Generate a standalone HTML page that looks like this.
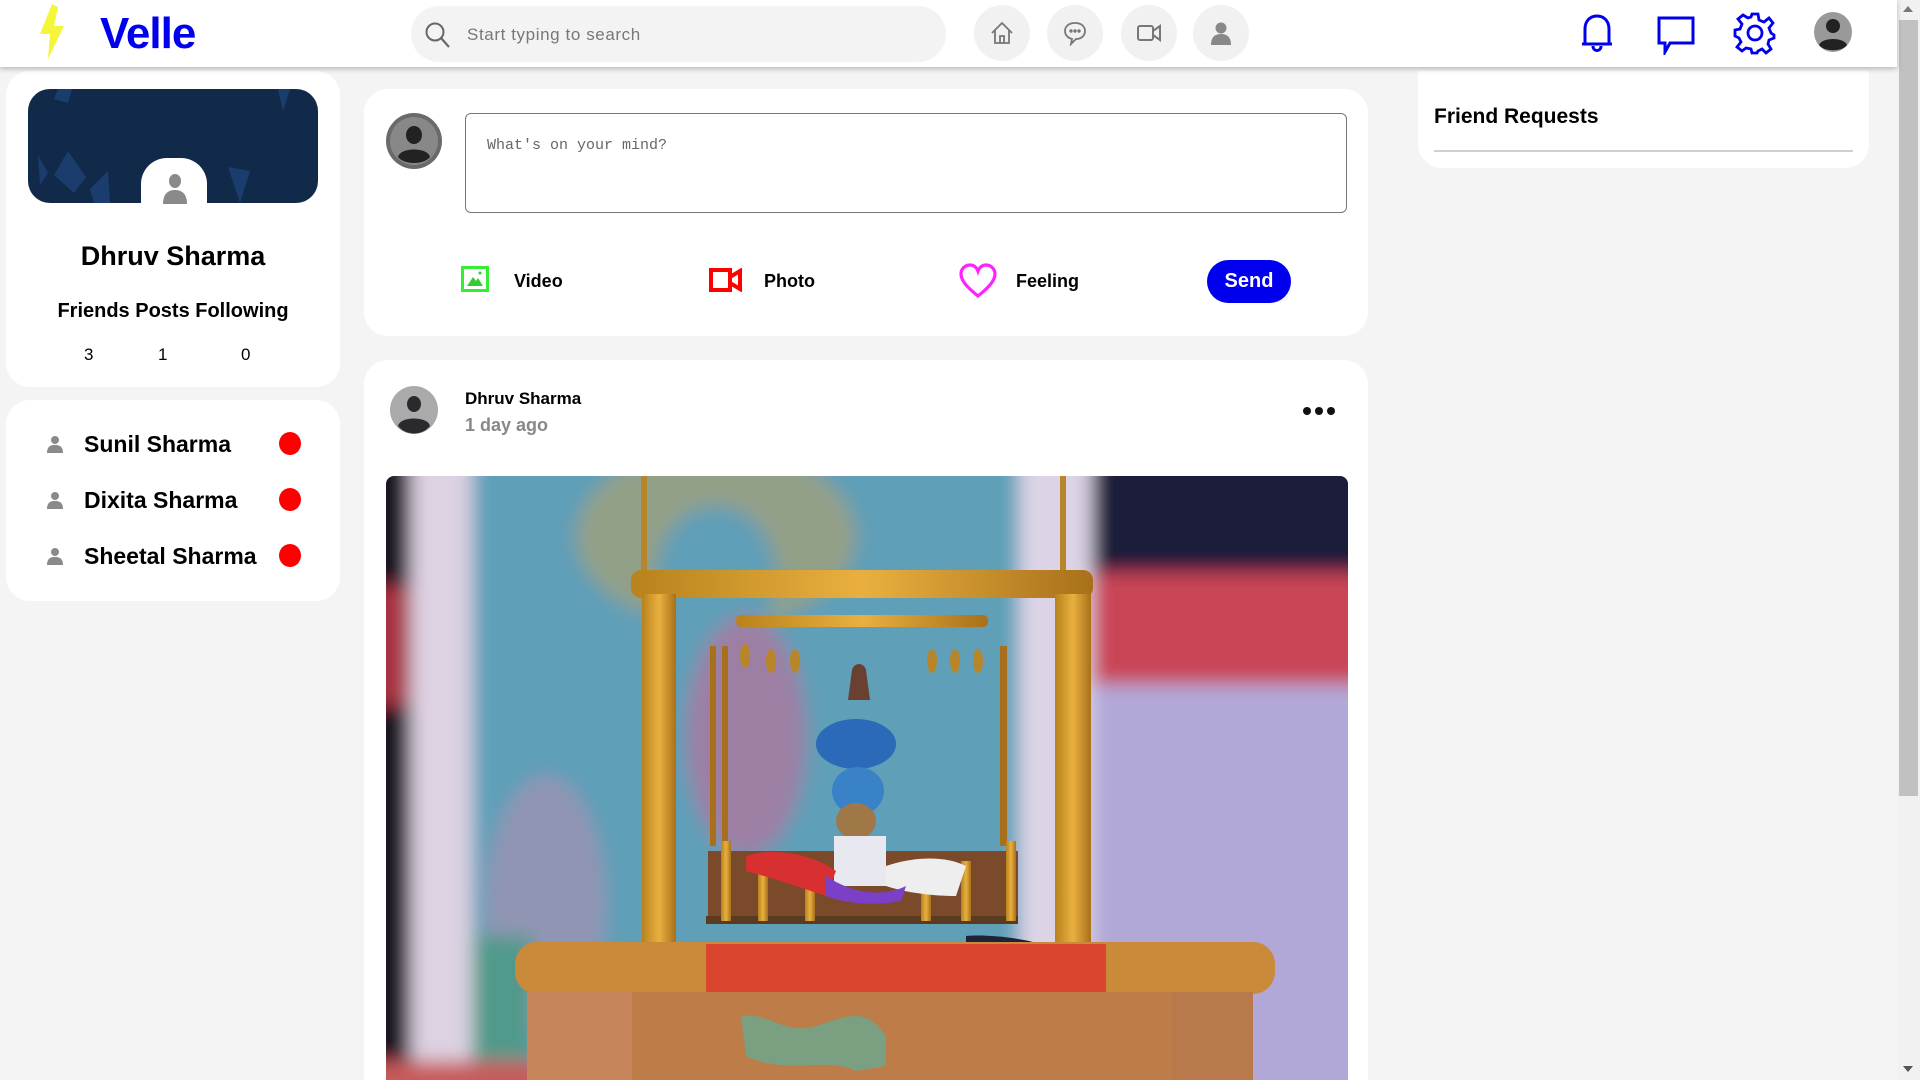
<!DOCTYPE html>
<html style="overflow:hidden;width:1920px;height:1080px"><head><meta charset="utf-8"><style>
*{margin:0;padding:0;box-sizing:border-box}
body{width:1920px;height:1080px;overflow:hidden;background:#f4f4f4;font-family:"Liberation Sans",Arial,sans-serif;position:relative}
.abs{position:absolute}
.hdr{left:0;top:0;width:1897px;height:67px;background:#fff;box-shadow:0 2px 5px rgba(0,0,0,.25);z-index:5}
.card{background:#fff;border-radius:24px;position:absolute}
.nb{position:absolute;top:5px;width:56px;height:56px;border-radius:50%;background:#f1f1f1;display:flex;align-items:center;justify-content:center}
.b{font-weight:bold}
</style></head><body>
<div class="abs hdr">
  <svg class="abs" style="left:36px;top:4px" width="32" height="55" viewBox="0 0 32 55"><path d="M16 0 L4 30 L14 30 L12 55 L28 22 L18 22 L22 3 Z" fill="#f5f53a"/></svg>
  <div class="abs b" style="left:100px;top:9px;font-size:44px;color:#0000ee;letter-spacing:-1px">Velle</div>
  <div class="abs" style="left:411px;top:6px;width:535px;height:56px;border-radius:28px;background:#f3f3f3"></div>
  <svg class="abs" style="left:424px;top:21px" width="28" height="28" viewBox="0 0 28 28"><circle cx="11" cy="11" r="8.5" fill="none" stroke="#666" stroke-width="2"/><path d="M17 17 L25 26" stroke="#666" stroke-width="2.2"/></svg>
  <div class="abs" style="left:467px;top:25px;font-size:17px;color:#777;letter-spacing:.6px">Start typing to search</div>
  <div class="nb" style="left:974px"><svg width="26" height="26" viewBox="0 0 26 26" fill="none" stroke="#777" stroke-width="1.8"><path d="M3 13 L13 3 L23 13 M6 10 V23 H20 V10 M11 23 V16 H15 V23"/></svg></div>
  <div class="nb" style="left:1047px"><svg width="26" height="26" viewBox="0 0 26 26" fill="none" stroke="#777" stroke-width="1.8"><path d="M13 3 C6 3 3 7 3 11 C3 15 6 18 10 19 L9 24 L14 19 C20 19 23 15 23 11 C23 7 20 3 13 3Z"/><circle cx="9" cy="11" r=".8" fill="#777"/><circle cx="13" cy="11" r=".8" fill="#777"/><circle cx="17" cy="11" r=".8" fill="#777"/></svg></div>
  <div class="nb" style="left:1121px"><svg width="28" height="26" viewBox="0 0 28 26" fill="none" stroke="#777" stroke-width="2"><rect x="3" y="6" width="15" height="14" rx="2"/><path d="M18 11 L25 6 V20 L18 15"/></svg></div>
  <div class="nb" style="left:1193px"><svg width="26" height="26" viewBox="0 0 26 26" fill="#888"><circle cx="13" cy="8" r="5.5"/><path d="M3 25 C3 17 7 14 13 14 C19 14 23 17 23 25Z"/></svg></div>
  <svg class="abs" style="left:1577px;top:12px" width="40" height="42" viewBox="0 0 40 42" fill="none" stroke="#0000ee" stroke-width="3"><path d="M8 32 V17 C8 9 13 4 20 4 C27 4 32 9 32 17 V32 Z M5 32 H35"/><path d="M16 34 C16 40 24 40 24 34"/></svg>
  <svg class="abs" style="left:1656px;top:15px" width="40" height="40" viewBox="0 0 40 40" fill="none" stroke="#0000ee" stroke-width="3"><path d="M3 3 H37 V28 H14 L9 37 V28 H3 Z"/></svg>
  <svg class="abs" style="left:1733px;top:11px" width="44" height="44" viewBox="0 0 44 44" fill="none" stroke="#0000ee" stroke-width="2.8"><path d="M19 3 H25 L26 9 L31 11 L36 7 L40 12 L36 17 L38 22 L41 24 V27 L36 29 L35 33 L38 38 L33 42 L29 38 L25 40 L24 42 H19 L18 38 L13 37 L9 40 L4 36 L8 31 L6 27 L2 25 V19 L7 18 L9 13 L5 8 L10 4 L15 7 L18 6 Z"/><circle cx="22" cy="22" r="7"/></svg>
  <svg class="abs" style="left:1814px;top:12px" width="38" height="40" viewBox="0 0 38 40"><ellipse cx="19" cy="20" rx="19" ry="20" fill="#999"/><circle cx="19" cy="14" r="7" fill="#222"/><path d="M5 33 C8 25 30 25 33 33 C28 40 10 40 5 33Z" fill="#222"/></svg>
</div>
<div class="abs" style="left:1897px;top:0;width:23px;height:1080px;background:#f1f1f1"></div>
<div class="abs" style="left:1899px;top:20px;width:19px;height:776px;background:#c1c1c1"></div>
<div class="abs" style="left:1903px;top:6px;width:0;height:0;border-left:5px solid transparent;border-right:5px solid transparent;border-bottom:6px solid #777"></div>
<div class="abs" style="left:1903px;top:1066px;width:0;height:0;border-left:5px solid transparent;border-right:5px solid transparent;border-top:6px solid #555"></div>

<div class="card" style="left:6px;top:71px;width:334px;height:316px">
  <div class="abs" style="left:22px;top:18px;width:290px;height:114px;border-radius:22px;background:#112a4a;overflow:hidden">
    <svg width="290" height="114" viewBox="0 0 290 114"><g fill="#1a3d6e"><path d="M30 0 L44 0 L40 14 L26 10Z"/><path d="M250 0 L262 0 L255 22Z"/><path d="M10 66 L20 84 L12 96Z"/><path d="M40 62 L58 88 L46 104 L26 86Z"/><path d="M62 100 L80 82 L82 114 L66 114Z"/><path d="M200 78 L222 82 L212 114Z"/></g></svg>
  </div>
  <div class="abs" style="left:135px;top:87px;width:66px;height:46px;background:#fff;border-radius:26px 26px 0 0"></div>
  <svg class="abs" style="left:155px;top:101px" width="28" height="32" viewBox="0 0 28 32" fill="#8a8a8a"><ellipse cx="14" cy="9" rx="6" ry="7"/><path d="M2 32 C2 22 7 18 14 18 C21 18 26 22 26 32Z"/></svg>
  <div class="abs b" style="left:0;width:334px;text-align:center;top:170px;font-size:27px;color:#000">Dhruv Sharma</div>
  <div class="abs b" style="left:0;width:334px;text-align:center;top:229px;font-size:20px;color:#000">Friends Posts Following</div>
  <div class="abs" style="left:78px;top:274px;font-size:17px">3</div>
  <div class="abs" style="left:152px;top:274px;font-size:17px">1</div>
  <div class="abs" style="left:235px;top:274px;font-size:17px">0</div>
</div>
<div class="card" style="left:6px;top:400px;width:334px;height:201px">
  <svg class="abs" style="left:41px;top:35px" width="16" height="18" viewBox="0 0 16 18" fill="#8a8a8a"><circle cx="8" cy="5" r="4"/><path d="M0 18 C0 11 4 10 8 10 C12 10 16 11 16 18Z"/></svg>
  <div class="abs b" style="left:78px;top:31px;font-size:23px">Sunil Sharma</div>
  <div class="abs" style="left:273px;top:32px;width:22px;height:23px;border-radius:50%;background:#f00"></div>
  <svg class="abs" style="left:41px;top:91px" width="16" height="18" viewBox="0 0 16 18" fill="#8a8a8a"><circle cx="8" cy="5" r="4"/><path d="M0 18 C0 11 4 10 8 10 C12 10 16 11 16 18Z"/></svg>
  <div class="abs b" style="left:78px;top:87px;font-size:23px">Dixita Sharma</div>
  <div class="abs" style="left:273px;top:88px;width:22px;height:23px;border-radius:50%;background:#f00"></div>
  <svg class="abs" style="left:41px;top:147px" width="16" height="18" viewBox="0 0 16 18" fill="#8a8a8a"><circle cx="8" cy="5" r="4"/><path d="M0 18 C0 11 4 10 8 10 C12 10 16 11 16 18Z"/></svg>
  <div class="abs b" style="left:78px;top:143px;font-size:23px">Sheetal Sharma</div>
  <div class="abs" style="left:273px;top:144px;width:22px;height:23px;border-radius:50%;background:#f00"></div>
</div>

<div class="card" style="left:364px;top:89px;width:1004px;height:247px">
  <svg class="abs" style="left:22px;top:24px" width="56" height="56" viewBox="0 0 56 56"><ellipse cx="28" cy="28" rx="28" ry="28" fill="#6a6a6a"/><ellipse cx="28" cy="28" rx="24" ry="24" fill="#888"/><ellipse cx="28" cy="22" rx="8" ry="9" fill="#222"/><path d="M12 44 C14 34 42 34 44 44 C38 52 18 52 12 44Z" fill="#222"/></svg>
  <div class="abs" style="left:101px;top:24px;width:882px;height:100px;border:1.5px solid #777;border-radius:6px"></div>
  <div class="abs" style="left:123px;top:48px;font-family:'Liberation Mono',monospace;font-size:15px;color:#666">What's on your mind?</div>
  <svg class="abs" style="left:97px;top:177px" width="28" height="26" viewBox="0 0 28 26"><rect x="1.5" y="1.5" width="25" height="23" fill="none" stroke="#33ee33" stroke-width="3"/><path d="M6 20 L12 11 L15 15 L17 12 L22 20Z" fill="#33cc33"/><circle cx="19" cy="7" r="1.5" fill="#33cc33"/></svg>
  <div class="abs b" style="left:150px;top:182px;font-size:18px">Video</div>
  <svg class="abs" style="left:345px;top:179px" width="34" height="24" viewBox="0 0 34 24"><rect x="2" y="2" width="19" height="20" fill="none" stroke="#f00" stroke-width="4"/><path d="M21 9 L31 3 V21 L21 15" fill="none" stroke="#f00" stroke-width="4"/></svg>
  <div class="abs b" style="left:400px;top:182px;font-size:18px">Photo</div>
  <svg class="abs" style="left:594px;top:174px" width="40" height="36" viewBox="0 0 40 36"><path d="M20 33 C10 25 3 18 3 11 C3 5 8 2 12 2 C16 2 19 5 20 8 C21 5 24 2 28 2 C32 2 37 5 37 11 C37 18 30 25 20 33Z" fill="none" stroke="#ff22ff" stroke-width="3.2"/></svg>
  <div class="abs b" style="left:652px;top:182px;font-size:18px">Feeling</div>
  <div class="abs b" style="left:843px;top:171px;width:84px;height:43px;border-radius:22px;background:#0000ee;color:#fff;font-size:20px;text-align:center;line-height:43px">Send</div>
</div>

<div class="card" style="left:1418px;top:71px;width:451px;height:97px;border-radius:0 0 24px 24px">
  <div class="abs b" style="left:16px;top:34px;font-size:21px">Friend Requests</div>
  <div class="abs" style="left:16px;top:79px;width:419px;height:2px;background:#d0d0d0"></div>
</div>

<div class="card" style="left:364px;top:360px;width:1004px;height:720px;border-radius:24px 24px 0 0">
  <svg class="abs" style="left:26px;top:26px" width="48" height="48" viewBox="0 0 48 48"><circle cx="24" cy="24" r="24" fill="#aaa"/><ellipse cx="24" cy="18" rx="7" ry="8" fill="#2a2a2e"/><path d="M8 40 C10 30 38 30 40 40 C32 50 16 50 8 40Z" fill="#2a2a2e"/></svg>
  <div class="abs b" style="left:101px;top:29px;font-size:17px">Dhruv Sharma</div>
  <div class="abs b" style="left:101px;top:55px;font-size:18px;color:#888">1 day ago</div>
  <div class="abs" style="left:939px;top:47px;display:flex;gap:4px"><span style="width:8px;height:8px;border-radius:50%;background:#111"></span><span style="width:8px;height:8px;border-radius:50%;background:#111"></span><span style="width:8px;height:8px;border-radius:50%;background:#111"></span></div>
</div>
<div class="abs" style="left:386px;top:476px;width:962px;height:604px;border-radius:8px 8px 0 0;overflow:hidden">
<svg width="962" height="604" viewBox="0 0 962 604">
<defs><filter id="bl" x="-10%" y="-10%" width="120%" height="120%"><feGaussianBlur stdDeviation="9"/></filter>
<linearGradient id="gd" x1="0" x2="1"><stop offset="0" stop-color="#b8821c"/><stop offset=".5" stop-color="#e9b040"/><stop offset="1" stop-color="#a8701a"/></linearGradient></defs>
<g filter="url(#bl)">
<rect x="-20" y="-20" width="1000" height="650" fill="#5f9cb6"/>
<rect x="-20" y="-20" width="45" height="650" fill="#1a1420"/>
<rect x="-20" y="110" width="45" height="120" fill="#a8303f"/>
<rect x="25" y="-20" width="62" height="650" fill="#ddd2e2"/>
<rect x="86" y="-20" width="550" height="650" fill="#5e9fb8"/>
<ellipse cx="330" cy="60" rx="140" ry="90" fill="#c0a060" opacity=".55"/>
<ellipse cx="330" cy="100" rx="60" ry="70" fill="#5e9fb8"/>
<ellipse cx="360" cy="260" rx="60" ry="120" fill="#c86a96" opacity=".6"/>
<ellipse cx="160" cy="430" rx="60" ry="130" fill="#c48cb0" opacity=".5"/>
<rect x="86" y="460" width="60" height="150" fill="#4f9a8a"/>
<rect x="633" y="-20" width="75" height="650" fill="#dcd4e6"/>
<rect x="706" y="-20" width="280" height="120" fill="#1c1a3a"/>
<rect x="706" y="96" width="280" height="112" fill="#c94456"/>
<rect x="706" y="208" width="280" height="420" fill="#b2a8d8"/>
<rect x="-20" y="585" width="260" height="40" fill="#c85a5a"/>
</g>
<rect x="255" y="0" width="6" height="100" fill="#b8862a"/>
<rect x="674" y="0" width="6" height="100" fill="#b8862a"/>
<rect x="245" y="94" width="462" height="28" rx="10" fill="url(#gd)"/>
<rect x="350" y="139" width="252" height="12" rx="5" fill="url(#gd)"/>
<rect x="256" y="118" width="34" height="350" fill="url(#gd)"/>
<rect x="669" y="118" width="36" height="350" fill="url(#gd)"/>
<rect x="324" y="170" width="6" height="200" fill="#a8701c"/>
<rect x="336" y="170" width="6" height="200" fill="#a8701c"/>
<rect x="614" y="170" width="7" height="200" fill="#a8701c"/>
<g fill="#b8862a"><ellipse cx="359" cy="180" rx="5" ry="12"/><ellipse cx="385" cy="185" rx="5" ry="12"/><ellipse cx="409" cy="185" rx="5" ry="12"/><ellipse cx="546" cy="185" rx="5" ry="12"/><ellipse cx="569" cy="185" rx="5" ry="12"/><ellipse cx="592" cy="185" rx="5" ry="12"/></g>
<path d="M462 224 L466 194 C468 186 478 186 480 194 L484 224Z" fill="#6a4030"/>
<rect x="322" y="375" width="310" height="70" fill="#7a4a2a"/>
<rect x="320" y="440" width="312" height="8" fill="#5a3a20"/>
<g fill="url(#gd)"><rect x="335" y="365" width="10" height="80"/><rect x="372" y="385" width="10" height="60"/><rect x="419" y="385" width="10" height="60"/><rect x="535" y="385" width="10" height="60"/><rect x="575" y="385" width="10" height="60"/><rect x="620" y="365" width="10" height="80"/></g>
<ellipse cx="470" cy="268" rx="40" ry="25" fill="#2a6ab8"/>
<ellipse cx="472" cy="315" rx="26" ry="24" fill="#3a82c8"/>
<ellipse cx="470" cy="345" rx="20" ry="18" fill="#a07848"/>
<rect x="448" y="360" width="52" height="50" fill="#e8e8f0"/>
<path d="M360 380 C390 370 430 380 450 395 L440 420 C410 410 380 400 360 395Z" fill="#d83030"/>
<path d="M500 390 C530 380 560 380 580 390 L570 420 C540 420 515 415 500 410Z" fill="#eee"/>
<path d="M440 400 C470 420 500 420 520 410 L515 425 C490 430 460 428 440 420Z" fill="#7a40c8"/>
<path d="M580 460 C600 458 640 462 660 470 L655 485 C630 482 600 480 580 475Z" fill="#202238"/>
<rect x="129" y="466" width="760" height="52" rx="22" fill="#c98a3a"/>
<rect x="320" y="468" width="400" height="48" fill="#d9452e"/>
<rect x="141" y="516" width="726" height="100" fill="#b87a4a"/>
<rect x="141" y="516" width="105" height="100" fill="#c6855a"/>
<rect x="246" y="516" width="540" height="100" fill="#bd7c48"/>
<path d="M355 540 C380 535 400 560 430 550 C460 540 480 530 500 560 L500 590 L470 595 C440 580 400 600 360 580Z" fill="#6aa890" opacity=".8"/>
</svg>
</div>
</body></html>
